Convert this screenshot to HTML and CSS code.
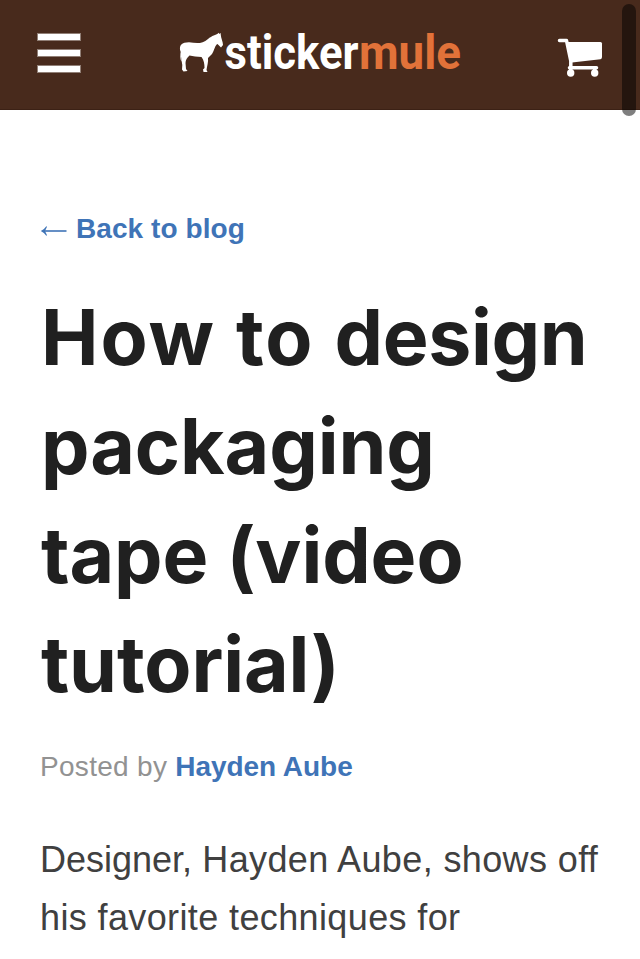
FILE: index.html
```html
<!DOCTYPE html>
<html lang="en">
<head>
<meta charset="utf-8">
<meta name="viewport" content="width=device-width">
<title>How to design packaging tape (video tutorial)</title>
<link rel="stylesheet" href="styles.css">
</head>
<body>
<header class="header">
  <button class="menu" aria-label="Menu"><span class="bar"></span><span class="bar"></span><span class="bar"></span></button>
  <svg class="logo" viewBox="0 0 284 50" aria-label="stickermule">
    <path class="horse" d="M1.500 20C-.5 13 3 10.300 10 10.300C17 11.200 23 12.500 29 7C33 3.500 37 3 39 1.500L39.500 .8L40.500 2L41.500 .8L41.800 3C42 6 44 10 44 13L42 15.500L38.500 12C36 13 35.500 18 33 22L29 26C29.500 30 28 34 27.500 38L28.500 40L24.500 40L24 37.500L25.500 36C25.500 32 25 28 22.500 25C18 25 14 24 10.500 23.500C8 26 6.500 28 6.500 31L7 37L8.500 39L4.500 39.500L3 37.500L3.300 33C2.500 30 3 27 2.500 24.500L2.500 30C1 27 1 23 2 18Z"/>
    <text class="word white" x="45.500" y="37" textLength="134" lengthAdjust="spacingAndGlyphs">sticker</text>
    <text class="word orange" x="180" y="37" textLength="102" lengthAdjust="spacingAndGlyphs">mule</text>
  </svg>
  <svg class="cart" viewBox="0 0 46 40" aria-label="Cart">
    <path class="fill" d="M10.500 4H43.500Q45 4 45 5.500V19Q45 20.800 43.500 21.200L15 24.500Z"/>
    <path class="line" d="M2.500 2.500H9.500L13.800 23V29"/>
    <circle class="fill" cx="13.700" cy="35" r="3.700"/><circle class="fill" cx="37.700" cy="35" r="3.700"/>
    <path class="line" d="M12.500 29.800H39.500"/>
    <path class="line" d="M13.700 30V35M37.700 30V35"/>
  </svg>
</header>
<main class="post">
  <a class="back"><svg class="arrow" viewBox="0 0 27 14"><path class="shaft" d="M26.500 7H3"/><path class="head" d="M.8 7Q4.500 5.200 6.300 2.200L7 2.700L5 7L7 11.300L6.300 11.800Q4.500 8.800 .8 7Z"/></svg>Back to blog</a>
  <h1 class="title"><span class="loose">How to </span><span class="snug">design</span><br>packaging<br>tape (video<br>tutorial)</h1>
  <p class="byline">Posted by <a class="author">Hayden Aube</a></p>
  <p class="body"><span class="lead">Designer,</span> Hayden Aube, shows off<br>his favorite techniques for</p>
</main>
<div class="scroll"></div>
</body>
</html>
```
FILE: styles.css
```css
* { box-sizing: border-box; }
html { height: 959px; overflow: hidden; }
body { margin: 0; height: 959px; overflow: hidden; background: #fff; font-family: "Liberation Sans", Arial, sans-serif; }
.header { display: flex; align-items: flex-start; height: 110px; padding: 0 37px; background: #482a1c; border-bottom: 1px solid #3c2115; }
.menu { display: flex; flex-direction: column; gap: 8px; width: 44px; margin-top: 33px; padding: 0; border: 0; background: none; }
.bar { height: 8px; width: 44px; background: #fff; border: 1px solid #a49489; border-color: rgba(255,255,255,.4); background-clip: padding-box; }
.logo { width: 284px; height: 50px; margin: 32px 0 0 98px; overflow: visible; }
.horse, .fill { fill: #fff; }
.word { font: bold 48.5px Roboto, sans-serif; }
.white { fill: #fff; }
.orange { fill: #e27239; }
.cart { width: 46px; height: 40px; margin: 38px 0 0 94px; flex: none; }
.line { fill: none; stroke: #fff; stroke-width: 3.500; stroke-linecap: round; stroke-linejoin: round; }
.post { padding: 98px 0 0 40px; white-space: nowrap; }
.back { display: flex; align-items: center; height: 42px; font-size: 28px; font-weight: bold; color: #3f74b7; letter-spacing: .08px; }
.arrow { width: 27px; height: 14px; margin-right: 9px; margin-top: 4px; }
.shaft { fill: none; stroke: #3f74b7; stroke-width: 1.600; }
.head { fill: #3f74b7; }
.title { margin: 32.5px 0 0 1px; font-family: Inter, sans-serif; font-size: 77px; line-height: 109.333px; letter-spacing: -.1px; font-weight: bold; color: #202020; }
.loose { letter-spacing: 1.9px; }
.snug { letter-spacing: -.4px; }
.byline { margin: 26.500px 0 0; font-size: 28px; line-height: 42px; letter-spacing: .3px; color: #929292; }
.author { color: #3f74b7; font-weight: bold; letter-spacing: -.05px; }
.body { margin: 43px 0 0; font-size: 36px; line-height: 58px; letter-spacing: .38px; color: #404040; }
.lead { letter-spacing: -.02px; }
.scroll { position: absolute; top: 4px; right: 4px; width: 14px; height: 112px; border-radius: 7px; background: rgba(0,0,0,.5); }
```
